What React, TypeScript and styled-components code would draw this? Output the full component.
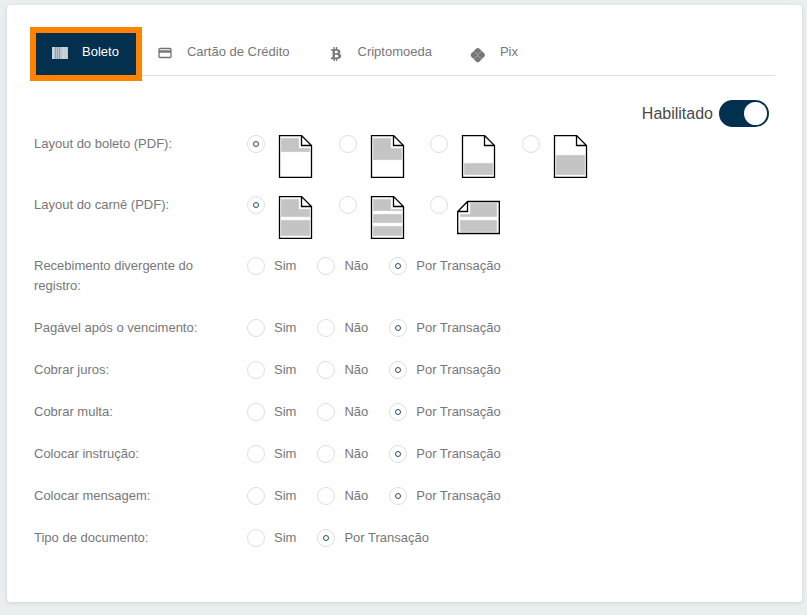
import React, { useState } from "react";
import styled, { createGlobalStyle } from "styled-components";
import { FaBtc } from "react-icons/fa";

const navy = "#03304e";
const orange = "#ff8200";

const GlobalStyle = createGlobalStyle`
  *, *::before, *::after { box-sizing: border-box; }
  body {
    margin: 0;
    background: #e9eef1;
    color: #777;
    font-family: "Liberation Sans", Arial, sans-serif;
    font-size: 13px;
    line-height: 20px;
  }
`;

const Page = styled.div`
  min-height: 100vh;
  padding: 5px 5px 13px 7px;
  display: flex;
`;

const Card = styled.main`
  flex: 1;
  padding: 28px 27px 24px;
  background: #fff;
  border-radius: 4px;
  box-shadow: 0 1px 4px rgba(0, 0, 0, 0.12);
`;

const TabList = styled.div`
  display: flex;
  gap: 5px;
  margin-left: -3px;
  padding-left: 5px;
  border-bottom: 1px solid #ddd;
`;

const TabButton = styled.button<{ $active: boolean }>`
  display: flex;
  align-items: flex-start;
  gap: 14px;
  height: 42px;
  padding: 9px 17px 13px 16px;
  border: 0;
  background: ${(p) => (p.$active ? navy : "transparent")};
  color: ${(p) => (p.$active ? "#fff" : "inherit")};
  font: inherit;
  outline: ${(p) => (p.$active ? `6px solid ${orange}` : "none")};
  cursor: pointer;
`;

const TabIcon = styled.span`
  display: flex;
  justify-content: center;
  width: 16px;
  height: 16px;
  margin-top: 5px;
`;

const EnableRow = styled.label`
  display: flex;
  justify-content: flex-end;
  align-items: center;
  gap: 6px;
  margin: 24px 6px 7px 0;
  color: #4a4a4a;
  font-size: 16px;
`;

const Switch = styled.input`
  appearance: none;
  display: flex;
  align-items: center;
  width: 50px;
  height: 27px;
  margin: 0;
  padding: 2px;
  border-radius: 14px;
  background: #bbb;
  cursor: pointer;

  &::before {
    content: "";
    width: 23px;
    height: 23px;
    border-radius: 50%;
    background: #fff;
  }

  &:checked {
    justify-content: flex-end;
    background: ${navy};
  }
`;

const Row = styled.div<{ $tall?: boolean }>`
  display: grid;
  grid-template-columns: 213px 1fr;
  align-items: start;
  padding-bottom: ${(p) => (p.$tall ? 17 : 22)}px;
`;

const RowLabel = styled.span`
  max-width: 180px;
`;

const TextOptions = styled.div`
  display: flex;
  gap: 21px;
`;

const PictureOptions = styled.div`
  display: grid;
  grid-template-columns: repeat(4, 1fr);
  max-width: 366px;
`;

const Option = styled.label`
  display: flex;
  align-items: flex-start;
  gap: 9px;
  cursor: pointer;
`;

const PictureOption = styled(Option)`
  padding-top: 1px;
`;

const Radio = styled.input`
  appearance: none;
  flex: none;
  display: grid;
  place-content: center;
  width: 18px;
  height: 18px;
  margin: 0;
  border: 1px solid #dedede;
  border-radius: 50%;
  background: #fff;
  cursor: pointer;

  ${Option}:not(${PictureOption}) > & {
    margin-top: 1px;
  }

  &:checked::before {
    content: "";
    width: 6px;
    height: 6px;
    border: 1px solid #1f4d72;
    border-radius: 50%;
  }
`;

const Picture = styled.svg`
  flex: none;
  display: block;
  width: 43px;
  height: 43px;
`;

const BarcodeIcon = () => (
  <svg width="16" height="12" viewBox="0 0 16 12">
    <rect width="16" height="12" fill="#b9c5cd" />
    <path d="M3.5 0V12M5.5 0V12M7.5 0V12" stroke="#8ea2b0" />
    <path d="M1 0V12M11.5 0V12" stroke="#ccd5db" strokeWidth="2" />
    <path d="M14 0V12" stroke="#d3dbe0" />
  </svg>
);

const CardIcon = () => (
  <svg width="14" height="12" viewBox="0 0 14 12" fill="none" stroke="#747474">
    <rect x="1" y="1.5" width="12" height="9" rx="1" strokeWidth="1.3" />
    <path d="M1 4.5H13" strokeWidth="2.4" />
  </svg>
);

const PixIcon = () => (
  <svg width="16" height="16" viewBox="0 0 16 16">
    <path
      d="M6.3 1.5Q7.8 .3 9.3 1.5L14.4 6.6Q15.6 8.1 14.4 9.6L9.3 14.7Q7.8 15.9 6.3 14.7L1.2 9.6Q0 8.1 1.2 6.6Z"
      fill="#777"
    />
    <path
      d="M3.4 4.6H4.6L7.8 7.8L11 4.6H12.2M3.4 11.6H4.6L7.8 8.4L11 11.6H12.2"
      fill="none"
      stroke="#b4b4b4"
      strokeWidth=".8"
    />
  </svg>
);

const PortraitPage = ({ fill, name }: { fill: string; name: string }) => (
  <Picture viewBox="0 0 43 43" role="img" aria-label={name}>
    <path d={fill} fill="#c4c4c4" stroke="#ececec" strokeWidth=".5" />
    <path
      d="M5.5 .5H27.5L37.5 10.5V42.5H5.5ZM27.5 .5V10.5H37.5"
      fill="none"
      stroke="#000"
      strokeWidth="1.3"
    />
  </Picture>
);

const LandscapePage = ({ fill, name }: { fill: string; name: string }) => (
  <Picture viewBox="0 0 43 43" role="img" aria-label={name}>
    <path d={fill} fill="#c4c4c4" stroke="#ececec" strokeWidth=".5" />
    <path
      d="M10.5 5.5H42.3V37.5H.7V15.5ZM10.5 5.5V15.5H.7"
      fill="none"
      stroke="#000"
      strokeWidth="1.3"
    />
  </Picture>
);

const tabs = [
  { name: "Boleto", icon: <BarcodeIcon /> },
  { name: "Cartão de Crédito", icon: <CardIcon /> },
  { name: "Criptomoeda", icon: <FaBtc size={14} /> },
  { name: "Pix", icon: <PixIcon /> },
];

const pictureRows = [
  {
    label: "Layout do boleto (PDF):",
    id: "boleto",
    pictures: [
      <PortraitPage name="Topo" fill="M7 3H25V13H36V17H7Z" />,
      <PortraitPage name="Metade superior" fill="M7 3H25V13H36V25H7Z" />,
      <PortraitPage name="Rodapé" fill="M7 28H36V40H7Z" />,
      <PortraitPage name="Metade inferior" fill="M7 20H36V40H7Z" />,
    ],
  },
  {
    label: "Layout do carnê (PDF):",
    id: "carne",
    pictures: [
      <PortraitPage name="Duas por página" fill="M7 3H25V13H36V21H7ZM7 24H36V40H7Z" />,
      <PortraitPage
        name="Três por página"
        fill="M7 3H25V13H36V15H7ZM7 18H36V27H7ZM7 30H36V40H7Z"
      />,
      <LandscapePage name="Paisagem" fill="M13 7H40V21H3V18H13ZM3 24H40V36H3Z" />,
    ],
  },
];

const three = ["Sim", "Não", "Por Transação"];

const textRows = [
  { label: "Recebimento divergente do registro:", id: "divergente", options: three },
  { label: "Pagável após o vencimento:", id: "vencimento", options: three },
  { label: "Cobrar juros:", id: "juros", options: three },
  { label: "Cobrar multa:", id: "multa", options: three },
  { label: "Colocar instrução:", id: "instrucao", options: three },
  { label: "Colocar mensagem:", id: "mensagem", options: three },
  { label: "Tipo de documento:", id: "documento", options: ["Sim", "Por Transação"] },
];

export default function App() {
  const [active, setActive] = useState("Boleto");

  return (
    <>
      <GlobalStyle />
      <Page>
        <Card>
          <TabList role="tablist">
            {tabs.map((tab) => (
              <TabButton
                key={tab.name}
                type="button"
                role="tab"
                aria-selected={tab.name === active}
                $active={tab.name === active}
                onClick={() => setActive(tab.name)}
              >
                <TabIcon aria-hidden="true">{tab.icon}</TabIcon>
                {tab.name}
              </TabButton>
            ))}
          </TabList>

          <EnableRow>
            Habilitado
            <Switch type="checkbox" role="switch" defaultChecked />
          </EnableRow>

          {pictureRows.map((row) => (
            <Row key={row.id} $tall role="radiogroup" aria-labelledby={`${row.id}-label`}>
              <RowLabel id={`${row.id}-label`}>{row.label}</RowLabel>
              <PictureOptions>
                {row.pictures.map((picture, i) => (
                  <PictureOption key={i}>
                    <Radio type="radio" name={row.id} defaultChecked={i === 0} />
                    {picture}
                  </PictureOption>
                ))}
              </PictureOptions>
            </Row>
          ))}

          {textRows.map((row) => (
            <Row key={row.id} role="radiogroup" aria-labelledby={`${row.id}-label`}>
              <RowLabel id={`${row.id}-label`}>{row.label}</RowLabel>
              <TextOptions>
                {row.options.map((option) => (
                  <Option key={option}>
                    <Radio
                      type="radio"
                      name={row.id}
                      defaultChecked={option === "Por Transação"}
                    />
                    {option}
                  </Option>
                ))}
              </TextOptions>
            </Row>
          ))}
        </Card>
      </Page>
    </>
  );
}
